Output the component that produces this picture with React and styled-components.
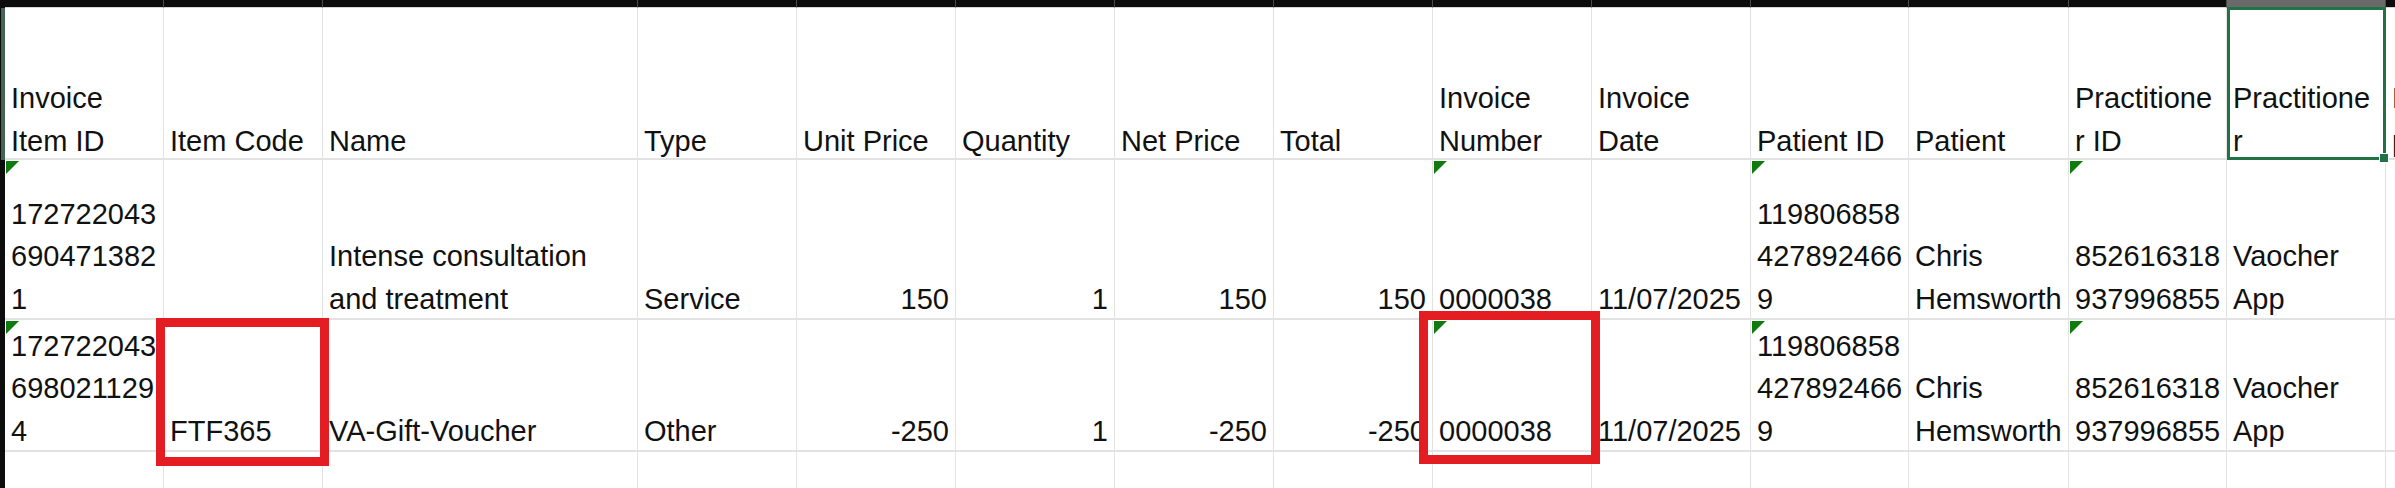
import React from "react";
import styled, { createGlobalStyle } from "styled-components";

const GlobalStyle = createGlobalStyle`
  html, body {
    margin: 0;
    padding: 0;
    height: 488px;
    overflow: hidden;
    background: #fff;
  }
  body {
    font-family: "Liberation Sans", Arial, sans-serif;
    color: #111;
  }
`;

const GRID_LINE = "#e2e2e2";

const Sheet = styled.div`
  display: grid;
  grid-template-columns: 5px 159px 159px 315px repeat(7, 159px) 158px 160px 158px 159px 1fr;
  grid-template-rows: 8px 152px 160px 132px 60px;
  width: 2395px;
  height: 488px;
  overflow: hidden;
`;

const ColumnHead = styled.div`
  background: ${props => (props.$selected ? "#6a6a6a" : "#0c0c0c")};
  border-right: 1px solid #4a4a4a;
  border-bottom: 1px solid #d6d6d6;
`;

const RowStrip = styled.div`
  background: ${props => (props.$active ? "#456552" : "#0c0c0c")};
  border-left: 1px solid #0c0c0c;
`;

const Cell = styled.div`
  position: relative;
  display: flex;
  flex-direction: column;
  justify-content: flex-end;
  align-items: ${props => (props.$align === "right" ? "flex-end" : "flex-start")};
  box-sizing: border-box;
  padding: 0 6px;
  border-right: 1px solid ${GRID_LINE};
  border-bottom: 2px solid ${GRID_LINE};
  font-size: 29px;
  line-height: 42.5px;
  min-width: 0;
`;

const Lines = styled.div`
  margin-bottom: ${props => (props.$head ? "-4px" : "-2px")};
  text-align: ${props => props.$align || "left"};
`;

const Line = styled.span`
  display: block;
  white-space: nowrap;
`;

const Flag = styled.span`
  position: absolute;
  top: 1px;
  left: 1px;
  width: 0;
  height: 0;
  border-top: 13px solid #0f7b0f;
  border-right: 13px solid transparent;
`;

const Selection = styled.div`
  position: absolute;
  top: -1px;
  left: 0;
  right: -1px;
  bottom: -2px;
  border: 3px solid #217346;
  z-index: 3;
`;

const Handle = styled.span`
  position: absolute;
  right: -6px;
  bottom: -6px;
  width: 8px;
  height: 8px;
  background: #217346;
  border: 1px solid #fff;
`;

const Mark = styled.div`
  position: absolute;
  top: ${props => props.$inset[0]}px;
  right: ${props => props.$inset[1]}px;
  bottom: ${props => props.$inset[2]}px;
  left: ${props => props.$inset[3]}px;
  border: 9px solid #e41d22;
  z-index: 5;
  pointer-events: none;
`;

const COLUMNS = [
  { header: ["Invoice", "Item ID"] },
  { header: ["Item Code"] },
  { header: ["Name"] },
  { header: ["Type"] },
  { header: ["Unit Price"], align: "right" },
  { header: ["Quantity"], align: "right" },
  { header: ["Net Price"], align: "right" },
  { header: ["Total"], align: "right" },
  { header: ["Invoice", "Number"], flag: true },
  { header: ["Invoice", "Date"] },
  { header: ["Patient ID"], flag: true },
  { header: ["Patient"] },
  { header: ["Practitione", "r ID"], flag: true },
  { header: ["Practitione", "r"], selected: true },
  { header: ["Payment", "provider"] },
];

const ROWS = [
  {
    cells: [
      ["172722043", "690471382", "1"],
      [],
      ["Intense consultation", "and treatment"],
      ["Service"],
      ["150"],
      ["1"],
      ["150"],
      ["150"],
      ["0000038"],
      ["11/07/2025"],
      ["119806858", "427892466", "9"],
      ["Chris", "Hemsworth"],
      ["852616318", "937996855"],
      ["Vaocher", "App"],
      [],
    ],
    marks: {},
  },
  {
    cells: [
      ["172722043", "698021129", "4"],
      ["FTF365"],
      ["VA-Gift-Voucher"],
      ["Other"],
      ["-250"],
      ["1"],
      ["-250"],
      ["-250"],
      ["0000038"],
      ["11/07/2025"],
      ["119806858", "427892466", "9"],
      ["Chris", "Hemsworth"],
      ["852616318", "937996855"],
      ["Vaocher", "App"],
      [],
    ],
    // red highlight boxes drawn over the sheet: top, right, bottom, left
    marks: { 1: [-2, -7, -16, -8], 8: [-9, -9, -14, -14] },
  },
];

const Text = ({ lines, head, align }) => (
  <Lines $head={head} $align={align}>
    {lines.map((l, i) => (
      <Line key={i}>{l}</Line>
    ))}
  </Lines>
);

const App = () => (
  <>
    <GlobalStyle />
    <Sheet>
      <RowStrip />
      {COLUMNS.map((c, i) => (
        <ColumnHead key={i} $selected={c.selected} />
      ))}

      <RowStrip $active />
      {COLUMNS.map((c, i) => (
        <Cell key={i}>
          <Text lines={c.header} head />
          {c.selected && (
            <Selection>
              <Handle />
            </Selection>
          )}
        </Cell>
      ))}

      {ROWS.map((row, r) => (
        <React.Fragment key={r}>
          <RowStrip />
          {row.cells.map((lines, i) => (
            <Cell key={i} $align={COLUMNS[i].align}>
              {(i === 0 || COLUMNS[i].flag) && <Flag />}
              {lines.length > 0 && <Text lines={lines} align={COLUMNS[i].align} />}
              {row.marks[i] && <Mark $inset={row.marks[i]} />}
            </Cell>
          ))}
        </React.Fragment>
      ))}

      <RowStrip />
      {COLUMNS.map((c, i) => (
        <Cell key={i} />
      ))}
    </Sheet>
  </>
);

export default App;
